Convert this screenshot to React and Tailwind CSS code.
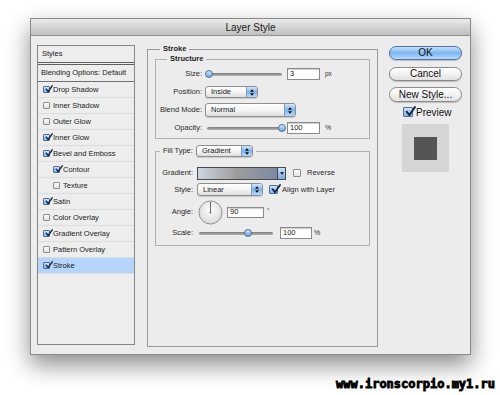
import React from 'react';

// Layer Style dialog (Photoshop, Aqua look)

const styleRows = [
  { name: 'Drop Shadow', on: true },
  { name: 'Inner Shadow', on: false },
  { name: 'Outer Glow', on: false },
  { name: 'Inner Glow', on: true },
  { name: 'Bevel and Emboss', on: true },
  { name: 'Contour', on: true, sub: true },
  { name: 'Texture', on: false, sub: true },
  { name: 'Satin', on: true },
  { name: 'Color Overlay', on: false },
  { name: 'Gradient Overlay', on: true },
  { name: 'Pattern Overlay', on: false },
  { name: 'Stroke', on: true, active: true },
];

const Check = ({ on, size = 8 }) => (
  <span
    className={`relative shrink-0 flex items-center justify-center border rounded-[1px] ${
      on
        ? 'border-[#4f6f97] bg-gradient-to-b from-[#d3e6fa] to-[#7fb1e6]'
        : 'border-[#8c8c8c] bg-gradient-to-b from-white to-[#e2e2e2]'
    }`}
    style={{ width: size, height: size }}
  >
    {on && (
      <svg viewBox="0 0 10 10" className="absolute left-[1px] -top-[2px]" style={{ width: size + 1, height: size + 1 }}>
        <path d="M1.5 5.2 L4 8.2 L9 1" fill="none" stroke="#15284a" strokeWidth="1.8" strokeLinecap="round" strokeLinejoin="round" />
      </svg>
    )}
  </span>
);

const Slider = ({ width, pos, className = '' }) => (
  <div className={`relative h-[8px] flex items-center ${className}`} style={{ width }}>
    <div className="w-full h-[3px] rounded-full bg-gradient-to-b from-[#7c7c7c] to-[#b4b4b4]" />
    <div
      className="absolute top-0 w-[8px] h-[8px] rounded-full border border-[#4b6f9b] bg-gradient-to-b from-[#d6e8fb] to-[#6ea4dd]"
      style={{ left: pos }}
    />
  </div>
);

const Field = ({ value, width, height = 12, className = '' }) => (
  <div
    className={`flex items-center pl-[2px] border border-[#8a8a8a] bg-white text-[7.5px] text-[#222] shadow-[inset_0_1px_1px_rgba(0,0,0,0.2)] ${className}`}
    style={{ width, height }}
  >
    {value}
  </div>
);

const Arrows = () => (
  <svg viewBox="0 0 6 10" className="w-[4px] h-[7px]">
    <path d="M3 0 L6 4 L0 4 Z M3 10 L6 6 L0 6 Z" fill="#111" />
  </svg>
);

const Select = ({ value, width, height = 12, className = '' }) => (
  <div
    className={`flex items-stretch border border-[#8e8e8e] rounded-[3px] overflow-hidden bg-gradient-to-b from-white via-[#f4f4f4] to-[#dedede] shadow-[0_1px_1px_rgba(0,0,0,0.15)] ${className}`}
    style={{ width, height }}
  >
    <span className="flex-1 flex items-center pl-[5px] text-[7.5px] text-[#1a1a1a]">{value}</span>
    <span className="w-[11px] flex items-center justify-center border-l border-[#7f9bbe] bg-gradient-to-b from-[#d2e6fb] via-[#7db3ec] to-[#b6d8f9]">
      <Arrows />
    </span>
  </div>
);

const Row = ({ label, labelW, h, children, className = '' }) => (
  <div className={`flex items-center ${className}`} style={{ height: h }}>
    <span className="text-right text-[7.5px] text-[#2a2a2a] shrink-0" style={{ width: labelW }}>
      {label}
    </span>
    {children}
  </div>
);

const AquaButton = ({ children, primary, h = 14, className = '' }) => (
  <div
    className={`w-[73px] flex items-center justify-center rounded-full border text-[10px] leading-none text-[#111] ${
      primary
        ? 'border-[#4d76a8] bg-gradient-to-b from-[#c6e0fb] via-[#7eb6f1] to-[#b5dafc]'
        : 'border-[#8b8b8b] bg-gradient-to-b from-white via-[#f2f2f2] to-[#e0e0e0]'
    } shadow-[0_1px_1px_rgba(0,0,0,0.2)] ${className}`}
    style={{ height: h }}
  >
    {children}
  </div>
);

export default function App() {
  return (
    <div className="w-[500px] h-[395px] overflow-hidden bg-white pt-[18px] pl-[30px] font-['Liberation_Sans',Arial,sans-serif]">
      {/* Window */}
      <div className="w-[441px] h-[337px] flex flex-col border border-[#8a8a8a] bg-[#ececec] shadow-[0_10px_22px_rgba(0,0,0,0.45)]">
        <div className="h-[17px] shrink-0 flex items-center justify-center border-b border-[#8f8f8f] bg-gradient-to-b from-[#ebebeb] to-[#bfbfbf] text-[10px] text-[#1b1b1b]">
          Layer Style
        </div>

        <div className="flex items-start pl-[6px] pt-[9px]">
          {/* Styles list */}
          <div className="w-[98px] h-[300px] shrink-0 border border-[#858585] bg-[#ededed] text-[7.5px] text-[#222]">
            <div className="h-[19px] flex items-center pl-[4px] border-b-[3px] border-double border-[#5e5e5e]">Styles</div>
            <div className="h-[17px] flex items-center pl-[3px] border-b border-[#707070]">Blending Options: Default</div>
            {styleRows.map((r) => (
              <div
                key={r.name}
                className={`h-[16px] flex items-center gap-[3px] border-b border-[#dcdcdc] ${
                  r.sub ? 'pl-[15px]' : 'pl-[5px]'
                } ${r.active ? 'bg-[#b5d5fd]' : ''}`}
              >
                <Check on={r.on} size={7} />
                <span>{r.name}</span>
              </div>
            ))}
          </div>

          {/* Main panel */}
          <fieldset className="ml-[12px] w-[231px] h-[302px] shrink-0 border border-[#9a9a9a]">
            <legend className="ml-[12px] px-[3px] text-[7.5px] leading-[8px] font-bold text-[#222]">Stroke</legend>

            <fieldset className="mx-[7px] mt-[2px] border border-[#b0b0b0] pt-[2px] pb-[1px]">
              <legend className="ml-[11px] px-[3px] text-[7.5px] leading-[8px] font-bold text-[#222]">Structure</legend>
              <Row label="Size:" labelW={46} h={18}>
                <Slider width={76} pos={-1} className="ml-[4px]" />
                <Field value="3" width={33} className="ml-[5px]" />
                <span className="ml-[5px] text-[6.5px] text-[#333]">px</span>
              </Row>
              <Row label="Position:" labelW={46} h={18}>
                <Select value="Inside" width={53} className="ml-[3px]" />
              </Row>
              <Row label="Blend Mode:" labelW={46} h={18}>
                <Select value="Normal" width={91} height={14} className="ml-[3px]" />
              </Row>
              <Row label="Opacity:" labelW={46} h={18}>
                <Slider width={78} pos={71} className="ml-[5px]" />
                <Field value="100" width={33} className="ml-[2px]" />
                <span className="ml-[5px] text-[7px] text-[#333]">%</span>
              </Row>
            </fieldset>

            <fieldset className="mx-[7px] mt-[6px] border border-[#b0b0b0] pt-[8px] pb-[5px]">
              <legend className="ml-[4px] px-[3px] flex items-center gap-[3px]">
                <span className="text-[7.5px] text-[#2a2a2a]">Fill Type:</span>
                <Select value="Gradient" width={57} />
              </legend>
              <Row label="Gradient:" labelW={37} h={16}>
                <div className="ml-[4px] w-[89px] h-[13px] flex border border-[#4a4a4a]">
                  <div className="flex-1 bg-gradient-to-r from-[#cdd5e2] via-[#9c9c9c] to-[#7d89a3]" />
                  <div className="w-[8px] flex items-center justify-center border-l border-[#445] bg-gradient-to-b from-[#c9e0f8] to-[#78abe6]">
                    <svg viewBox="0 0 6 4" className="w-[4px] h-[3px]">
                      <path d="M0 0 L6 0 L3 4 Z" fill="#111" />
                    </svg>
                  </div>
                </div>
                <span className="ml-[7px]">
                  <Check on={false} size={8} />
                </span>
                <span className="ml-[6px] text-[7.5px] text-[#2a2a2a]">Reverse</span>
              </Row>
              <Row label="Style:" labelW={37} h={17}>
                <Select value="Linear" width={66} height={13} className="ml-[4px]" />
                <span className="ml-[6px]">
                  <Check on size={9} />
                </span>
                <span className="ml-[4px] text-[7.5px] text-[#2a2a2a]">Align with Layer</span>
              </Row>
              <Row label="Angle:" labelW={37} h={28}>
                <svg viewBox="0 0 26 26" className="ml-[5px] w-[25px] h-[25px]">
                  <defs>
                    <radialGradient id="dial" cx="50%" cy="40%" r="60%">
                      <stop offset="0%" stopColor="#ffffff" />
                      <stop offset="100%" stopColor="#d9d9d9" />
                    </radialGradient>
                  </defs>
                  <circle cx="13" cy="13" r="12" fill="url(#dial)" stroke="#8f8f8f" strokeWidth="1" />
                  <line x1="13" y1="13" x2="13" y2="2" stroke="#555" strokeWidth="0.9" />
                  <circle cx="13" cy="13" r="0.9" fill="#555" />
                </svg>
                <Field value="90" width={37} height={11} className="ml-[4px]" />
                <span className="ml-[3px] self-start mt-[8px] text-[6px] text-[#333]">°</span>
              </Row>
              <Row label="Scale:" labelW={37} h={14}>
                <Slider width={74} pos={45} className="ml-[6px]" />
                <Field value="100" width={32} className="ml-[7px]" />
                <span className="ml-[2px] text-[7px] text-[#333]">%</span>
              </Row>
            </fieldset>
          </fieldset>

          {/* Buttons */}
          <div className="ml-[11px] w-[73px] flex flex-col pt-[1px]">
            <AquaButton primary>OK</AquaButton>
            <AquaButton className="mt-[7px]">Cancel</AquaButton>
            <AquaButton h={15} className="mt-[6px]">New Style...</AquaButton>
            <div className="mt-[3px] h-[14px] flex items-center pl-[14px]">
              <Check on size={10} />
              <span className="ml-[3px] text-[10px] text-[#111]">Preview</span>
            </div>
            <div className="mt-[5px] ml-[13px] w-[47px] h-[48px] flex items-center justify-center bg-[#d5d5d5]">
              <div className="w-[23px] h-[23px] bg-[#555555]" />
            </div>
          </div>
        </div>
      </div>

      {/* Watermark */}
      <div className="mt-[22px] pr-[5px] flex justify-end">
        <span className="h-[14px] leading-[14px] font-['DejaVu_Sans_Mono',monospace] font-bold text-[12px] text-black [-webkit-text-stroke:0.9px_#000] [text-shadow:1px_0_0_#fff,-1px_0_0_#fff,0_1px_0_#fff,0_-1px_0_#fff,1px_1px_0_#fff,-1px_-1px_0_#fff,1px_-1px_0_#fff,-1px_1px_0_#fff]">
          www.ironscorpio.my1.ru
        </span>
      </div>
    </div>
  );
}
